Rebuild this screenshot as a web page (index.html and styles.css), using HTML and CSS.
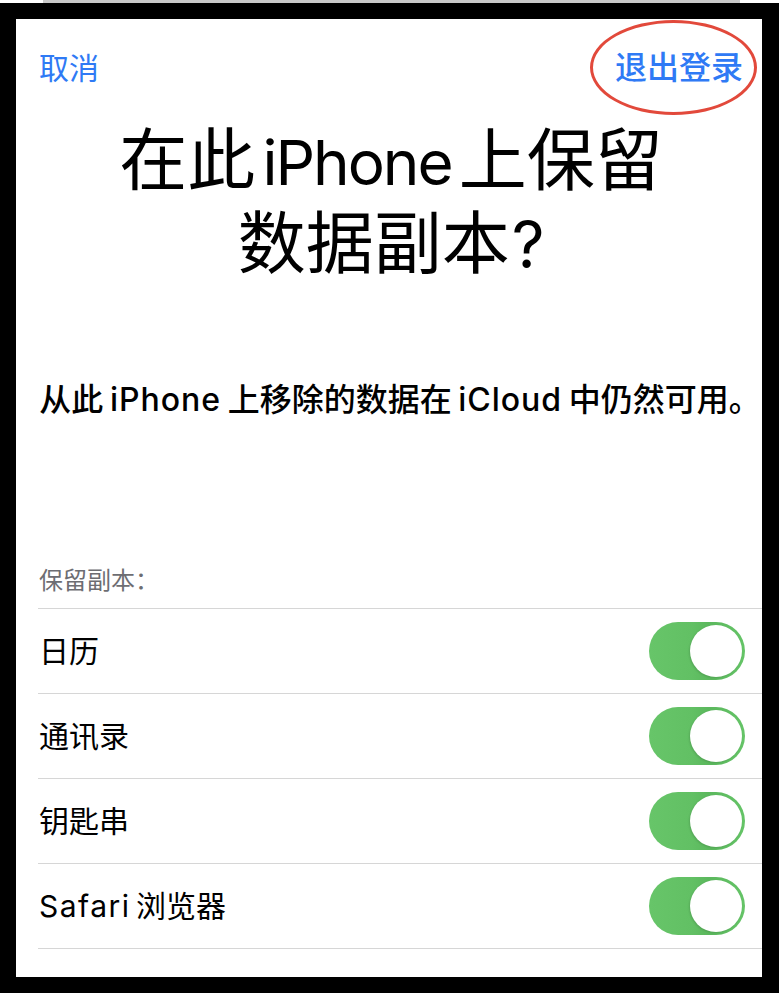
FILE: index.html
```html
<!DOCTYPE html>
<html lang="zh-CN">
<head>
<meta charset="utf-8">
<title>保留数据副本</title>
<link rel="stylesheet" href="styles.css">
</head>
<body>
<div class="topline"></div>
<div class="frame">
  <div class="screen">
    <header class="nav">
      <span class="nav-btn cancel">取消</span>
      <span class="nav-btn signout">退出登录<span class="ring"></span></span>
    </header>
    <h1 class="title">在此 <span class="en">iPhone</span> 上保留<br>数据副本<span class="q">?</span></h1>
    <p class="subtitle">从此 <span class="en">iPhone</span> 上移除的数据在 <span class="en">iCloud</span> 中仍然可用。</p>
    <section class="group">
      <div class="group-label">保留副本：</div>
      <ul class="list">
        <li class="row"><span class="row-text">日历</span><span class="toggle"><span class="knob"></span></span></li>
        <li class="row"><span class="row-text">通讯录</span><span class="toggle"><span class="knob"></span></span></li>
        <li class="row"><span class="row-text">钥匙串</span><span class="toggle"><span class="knob"></span></span></li>
        <li class="row"><span class="row-text"><span class="en">Safari</span> 浏览器</span><span class="toggle"><span class="knob"></span></span></li>
      </ul>
    </section>
  </div>
</div>
</body>
</html>
```

FILE: styles.css
```css
* { box-sizing: border-box; }

html, body {
  margin: 0;
  padding: 0;
  background: #ffffff;
}

body {
  width: 779px;
  height: 1000px;
  overflow: hidden;
  font-family: Inter, "Noto Sans CJK SC", sans-serif;
  color: #000;
}

.topline {
  height: 3px;
  margin-left: 43px;
  width: 697px;
  background: #c9c9c9;
}

.frame {
  width: 779px;
  border-style: solid;
  border-color: #000;
  border-width: 16px 17px 16px 16px;
}

.screen {
  height: 958px;
  background: #fff;
  display: flex;
  flex-direction: column;
}

.nav {
  display: flex;
  justify-content: space-between;
  align-items: center;
  padding: 31px 19px 0 23px;
}

.nav-btn {
  line-height: 36px;
  color: #2f7af5;
}

.cancel {
  font-size: 30px;
  font-weight: 400;
}

.signout {
  position: relative;
  font-size: 32px;
  font-weight: 500;
}

.ring {
  position: absolute;
  left: -25px;
  right: -14px;
  top: -30px;
  bottom: -29px;
  border: 3px solid #e2493b;
  border-radius: 50%;
}

.title {
  margin: 34px 0 0;
  text-align: center;
  font-size: 68px;
  line-height: 80px;
  font-weight: 400;
  word-spacing: -12px;
  padding-left: 4px;
}

.title .en {
  font-size: 62px;
  letter-spacing: -2px;
}

.title .q {
  font-family: Inter, sans-serif;
  font-size: 64px;
  font-weight: 400;
  margin-left: 2px;
}

.subtitle {
  margin: 95px 0 0;
  text-align: center;
  font-size: 32px;
  line-height: 40px;
  font-weight: 500;
  white-space: nowrap;
  padding-left: 22px;
  word-spacing: -2px;
}

.subtitle .en {
  letter-spacing: 1px;
}

.group {
  margin: 146px 0 0 22px;
}

.group-label {
  font-size: 24px;
  line-height: 30px;
  color: #6d6d72;
  padding: 0 0 12px 1px;
}

.list {
  list-style: none;
  margin: 0;
  padding: 0;
  border-top: 1px solid #d6d6d6;
}

.row {
  height: 85px;
  display: flex;
  align-items: center;
  justify-content: space-between;
  border-bottom: 1px solid #d6d6d6;
  padding: 0 17px 0 1px;
}

.row-text {
  font-size: 30px;
  line-height: 36px;
  word-spacing: -3px;
}

.row-text .en {
  letter-spacing: 1.5px;
}

.toggle {
  width: 96px;
  height: 58px;
  border-radius: 29px;
  background: linear-gradient(90deg, #67c569 0%, #62c064 45%, #5bb85d 62%, #65c467 100%);
  display: flex;
  justify-content: flex-end;
  align-items: center;
  padding-right: 3px;
}

.knob {
  width: 52px;
  height: 52px;
  border-radius: 50%;
  background: #fff;
  box-shadow: -1px 1px 2px rgba(0, 0, 0, 0.12);
}
```
